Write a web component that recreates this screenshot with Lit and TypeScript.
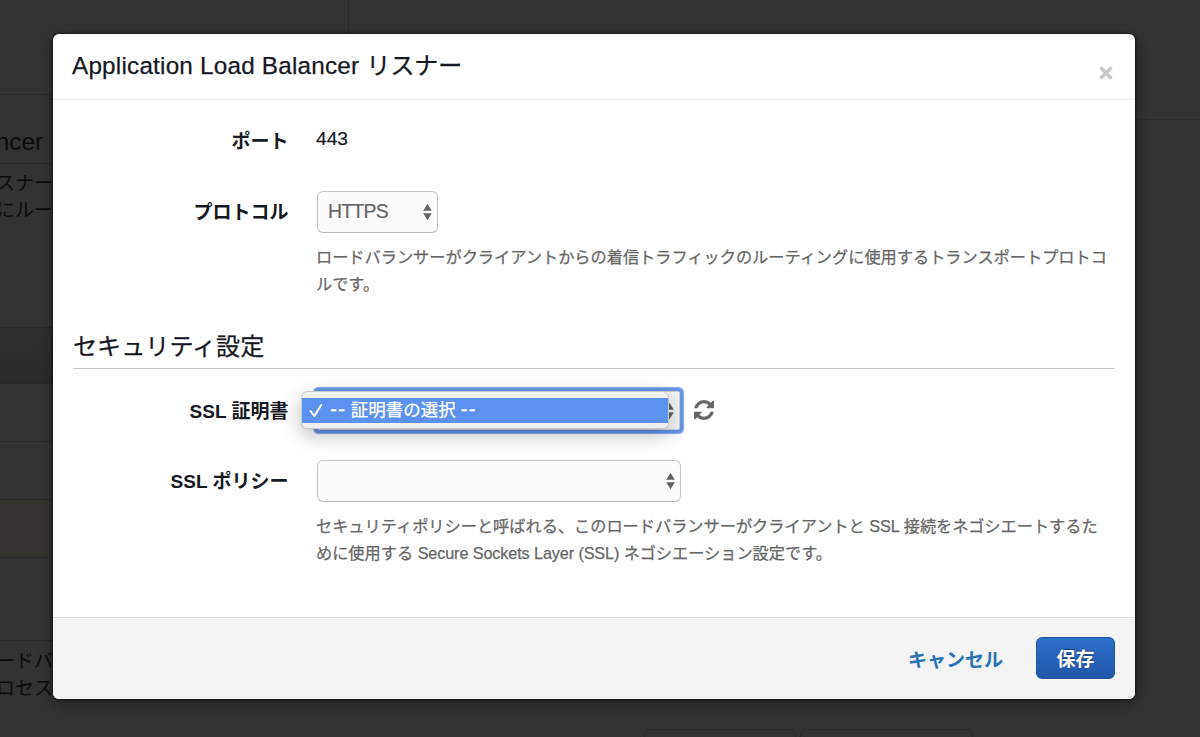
import { LitElement, html, css } from "lit";
import { customElement, property } from "lit/decorators.js";

@customElement("sort-arrows")
class SortArrows extends LitElement {
  static styles = css`
    :host { display: block; width: 9px; height: 18px; }
    svg { display: block; }
  `;
  render() {
    return html`<svg width="9" height="18" viewBox="0 0 9 18" fill="#646464">
      <path d="M4.5 0.8 8.8 7.8H.2zM.2 10.2h8.6L4.5 17.2z" />
    </svg>`;
  }
}

@customElement("select-box")
class SelectBox extends LitElement {
  @property() value = "";
  @property({ type: Boolean, reflect: true }) focused = false;
  static styles = css`
    :host {
      display: flex; align-items: center; justify-content: space-between;
      box-sizing: border-box; height: 42px; padding: 0 5px 0 10px;
      border: 1px solid #c6c6c6; border-bottom-color: #bdbdbd; border-radius: 6px;
      background: #fbfbfb; color: #666; font-size: 19.4px;
    }
    span { letter-spacing: -0.75px; line-height: 38px; padding-bottom: 2px; -webkit-text-stroke: 0.2px; }
    :host([focused]) {
      border-color: #cfd0d4; border-radius: 2px; height: 39px;
      background: #f5f5f5;
      box-shadow: 0 0 0 3px #6793e6, 0 0 1px 4px #86a9ec;
    }
  `;
  render() {
    return html`<span>${this.value}</span><sort-arrows></sort-arrows>`;
  }
}

@customElement("dimmed-page")
class DimmedPage extends LitElement {
  static styles = css`
    :host {
      display: grid; grid-template-columns: 53px 1fr 65px; height: 737px;
      background: #333; color: #0b0c0e; overflow: hidden;
    }
    .left { display: flex; flex-direction: column; }
    .cell {
      box-sizing: border-box; border-bottom: 1px solid #292929; flex: none;
      white-space: nowrap; display: flex; flex-direction: column;
      align-items: flex-end; justify-content: flex-end;
    }
    .c1 { height: 95px; }
    .c2 { height: 69px; font-size: 24.3px; line-height: 42px; padding-right: 10px; }
    .c3 { height: 164px; justify-content: flex-start; font-size: 19px; line-height: 27px; padding-top: 6px; }
    .c4 { height: 56px; background: linear-gradient(#303030, #2b2b2b); }
    .c5 { height: 58px; }
    .c6 { height: 58px; }
    .c7 { height: 58px; background: #35332f; }
    .c8 { height: 83px; }
    .c9 { height: 96px; border: 0; justify-content: flex-start; font-size: 19px; line-height: 27px; padding-top: 7px; }
    .middle { display: flex; flex-direction: column; justify-content: space-between; }
    .tab { box-sizing: border-box; width: 296px; height: 40px; border-right: 1px solid #292929; }
    .buttons { display: flex; gap: 4px; padding-left: 591px; height: 8px; overflow: hidden; }
    .button { box-sizing: border-box; height: 40px; border: 1px solid #2a2a2a; border-radius: 6px; }
    .b1 { width: 152px; }
    .b2 { width: 173px; }
    .right { height: 120px; box-sizing: border-box; border-bottom: 1px solid #2d2d2d; }
  `;
  render() {
    return html`
      <div class="left">
        <div class="cell c1"></div>
        <div class="cell c2">ncer</div>
        <div class="cell c3"><span>スナー</span><span>にルー</span></div>
        <div class="cell c4"></div>
        <div class="cell c5"></div>
        <div class="cell c6"></div>
        <div class="cell c7"></div>
        <div class="cell c8"></div>
        <div class="cell c9"><span>ードバ</span><span>プロセス</span></div>
      </div>
      <div class="middle">
        <div class="tab"></div>
        <div class="buttons"><div class="button b1"></div><div class="button b2"></div></div>
      </div>
      <div class="right"></div>
    `;
  }
}

@customElement("app-root")
class AppRoot extends LitElement {
  static styles = css`
    :host {
      display: block; position: relative; width: 1200px; height: 737px; overflow: hidden;
      font-family: "Liberation Sans", "Noto Sans CJK JP", sans-serif; color: #16191f;
    }
    .overlay { position: absolute; inset: 0; padding: 34px 65px 38px 53px; }
    .dialog {
      display: flex; flex-direction: column; height: 665px; border-radius: 6px;
      background: #fff; box-shadow: 0 0 2px 1px rgba(0,0,0,.45), 0 4px 14px rgba(0,0,0,.4);
    }
    header {
      display: flex; justify-content: space-between; box-sizing: border-box; height: 66px;
      border-bottom: 1px solid #ececec; padding: 0 22px 0 19px; flex: none;
    }
    h1, h2 { margin: 0; font-weight: 400; white-space: nowrap; -webkit-text-stroke: 0.25px; }
    h1 { font-size: 24.3px; line-height: 64px; letter-spacing: 0.2px; }
    .kana { letter-spacing: -0.4px; }
    .close { margin-top: 32px; width: 14px; height: 14px; }
    main { flex: 1; }
    .row { display: grid; grid-template-columns: 235.5px 1fr; column-gap: 27.5px; }
    .label {
      font-size: 19px; font-weight: 700; text-align: right; line-height: 44px; white-space: nowrap;
    }
    .port { height: 91px; }
    .port .label { padding-top: 20px; }
    .value { font-size: 19.2px; line-height: 42px; padding-top: 18px; -webkit-text-stroke: 0.2px; }
    .protocol { height: 136px; }
    .short { width: 121px; margin-left: 1px; }
    .long { width: 364px; margin-left: 1px; }
    .help {
      color: #666; font-size: 16.2px; line-height: 27px; padding: 11px 0 0; white-space: nowrap;
      -webkit-text-stroke: 0.25px;
    }
    .latin { letter-spacing: -0.1px; }
    h2 {
      margin: 0 20px 0 20px; font-size: 24.1px; line-height: 40px; height: 41px;
      border-bottom: 1px solid #c9c9c9;
    }
    .certificate { margin-top: 21px; height: 70px; }
    .picker { position: relative; display: flex; align-items: flex-start; padding-top: 1px; }
    .picker .long { width: 363px; }
    .refresh { margin: 9px 0 0 14px; }
    .menu {
      position: absolute; left: -15px; top: 1px; width: 368px; height: 38px;
      box-sizing: border-box; padding: 6px 0; border: 1px solid #c7c9ca; border-radius: 6px;
      background: #efefef; box-shadow: 0 6px 20px rgba(0,0,0,.26);
    }
    .option {
      display: flex; align-items: center; height: 25px; padding-left: 7px;
      background: #5b92f0; color: #fff; font-size: 17.5px; line-height: 25px; white-space: nowrap;
      -webkit-text-stroke: 0.25px;
    }
    .option svg { margin-right: 7px; }
    .dash { font-size: 21px; line-height: 20px; letter-spacing: 0.9px; }
    footer {
      display: flex; align-items: center; justify-content: flex-end; gap: 33px;
      box-sizing: border-box; height: 82px; padding: 0 20px 2px 0; flex: none;
      border-top: 1px solid #dcdcdc; border-radius: 0 0 6px 6px; background: #f4f4f4;
      box-shadow: inset 0 1px #fff; font-size: 19px; font-weight: 700;
    }
    .cancel { color: #2a72b8; padding-top: 1px; }
    .save {
      box-sizing: border-box; width: 79px; height: 42px; border: 1px solid #1e54a3; border-radius: 6px;
      background: linear-gradient(#2e70cb, #1f57a8); color: #fff; line-height: 43px; text-align: center;
      text-shadow: 0 -1px 1px rgba(0,0,0,.4);
    }
  `;
  render() {
    return html`
      <dimmed-page></dimmed-page>
      <div class="overlay">
        <div class="dialog">
          <header>
            <h1>Application Load Balancer <span class="kana">リスナー</span></h1>
            <svg class="close" viewBox="0 0 14 14" fill="none" stroke="#c8c8c8" stroke-width="3.6" stroke-linecap="round">
              <path d="M2.5 2.5l9 9M11.5 2.5l-9 9" />
            </svg>
          </header>
          <main>
            <div class="row port">
              <div class="label">ポート</div>
              <div class="value">443</div>
            </div>
            <div class="row protocol">
              <div class="label">プロトコル</div>
              <div>
                <select-box class="short" value="HTTPS"></select-box>
                <div class="help">ロードバランサーがクライアントからの着信トラフィックのルーティングに使用するトランスポートプロトコ<br>ルです。</div>
              </div>
            </div>
            <h2>セキュリティ設定</h2>
            <div class="row certificate">
              <div class="label">SSL 証明書</div>
              <div class="picker">
                <select-box class="long" focused></select-box>
                <svg class="refresh" width="20" height="20" viewBox="0 0 1536 1536" fill="#666">
                  <path d="M1511 928q0 5-1 7-64 268-268 434.500T764 1536q-146 0-282.500-55T238 1324l-129 129q-19 19-45 19t-45-19-19-45V960q0-26 19-45t45-19h448q26 0 45 19t19 45-19 45l-137 137q71 66 161 102t187 36q134 0 250-65t186-179q11-17 53-117 8-23 30-23h192q13 0 22.500 9.500t9.500 22.500zm25-800v448q0 26-19 45t-45 19h-448q-26 0-45-19t-19-45 19-45l138-138Q969 256 768 256q-134 0-250 65T332 500q-11 17-53 117-8 23-30 23H50q-13 0-22.500-9.500T18 608v-7q65-268 270-434.500T768 0q146 0 284 55.500T1297 212l130-129q19-19 45-19t45 19 19 45z" />
                </svg>
                <div class="menu">
                  <div class="option">
                    <svg width="14" height="15" viewBox="0 0 14 15" fill="none" stroke="#fff" stroke-width="2" stroke-linecap="round" stroke-linejoin="round">
                      <path d="M1.600 8.200l3.800 4.800L12.200 2" />
                    </svg>
                    <span><span class="dash">--</span> 証明書の選択 <span class="dash">--</span></span>
                  </div>
                </div>
              </div>
            </div>
            <div class="row">
              <div class="label">SSL ポリシー</div>
              <div>
                <select-box class="long"></select-box>
                <div class="help">セキュリティポリシーと呼ばれる、このロードバランサーがクライアントと SSL 接続をネゴシエートするた<br>めに使用する <span class="latin">Secure Sockets Layer (SSL)</span> ネゴシエーション設定です。</div>
              </div>
            </div>
          </main>
          <footer>
            <span class="cancel">キャンセル</span>
            <div class="save">保存</div>
          </footer>
        </div>
      </div>
    `;
  }
}
